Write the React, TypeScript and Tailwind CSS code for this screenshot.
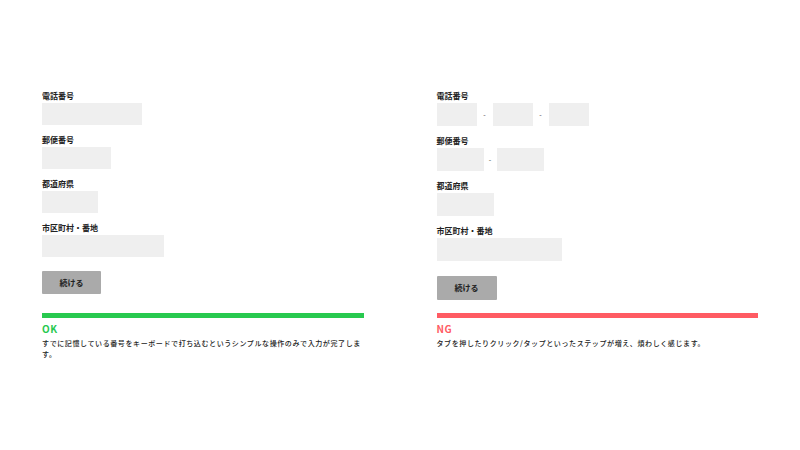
const font = { fontFamily: '"Noto Sans CJK JP", "Noto Sans", sans-serif' };

function Label({ children }: { children: React.ReactNode }) {
  return (
    <p className="text-[8px] leading-[12px] font-bold text-[#222]">{children}</p>
  );
}

function Campo({ className }: { className: string }) {
  return <div className={`bg-[#efefef] ${className}`} />;
}

function Guion({ ancho }: { ancho: string }) {
  return (
    <span className={`${ancho} text-center text-[7px] leading-none text-[#444]`}>
      -
    </span>
  );
}

function Resultado({
  tipo,
  texto,
}: {
  tipo: "OK" | "NG";
  texto: string;
}) {
  const ok = tipo === "OK";
  return (
    <div>
      <div className={`h-[5px] ${ok ? "bg-[#28c94f]" : "bg-[#ff5b63]"}`} />
      <p
        className={`mt-[5px] text-[10px] leading-[12px] font-bold tracking-[0.5px] ${
          ok ? "text-[#28c94f]" : "text-[#ff5b63]"
        }`}
      >
        {tipo}
      </p>
      <p className="mt-[3px] text-[7px] leading-[10.5px] tracking-[0.6px] font-medium text-[#222]">
        {texto}
      </p>
    </div>
  );
}

export default function App() {
  return (
    <div
      className="w-[800px] h-[450px] bg-white px-[42px] pt-[90px] grid grid-cols-2 gap-x-[73px] gap-y-[13px] content-start"
      style={font}
    >
      {/* formulario izquierdo */}
      <div className="flex flex-col gap-[9px] self-start">
        <div className="flex flex-col gap-[1px]">
          <Label>電話番号</Label>
          <Campo className="w-[100px] h-[22px]" />
        </div>
        <div className="flex flex-col gap-[1px]">
          <Label>郵便番号</Label>
          <Campo className="w-[69px] h-[22px]" />
        </div>
        <div className="flex flex-col gap-[1px]">
          <Label>都道府県</Label>
          <Campo className="w-[56px] h-[22px]" />
        </div>
        <div className="flex flex-col gap-[1px]">
          <Label>市区町村・番地</Label>
          <Campo className="w-[122px] h-[22px]" />
        </div>
        <button className="mt-[5px] w-[59px] h-[23px] bg-[#aaaaaa] rounded-[1px] text-[8px] font-bold text-[#222]">
          続ける
        </button>
      </div>

      {/* formulario derecho */}
      <div className="flex flex-col gap-[9px]">
        <div className="flex flex-col gap-[1px]">
          <Label>電話番号</Label>
          <div className="flex items-center">
            <Campo className="w-[40px] h-[23px]" />
            <Guion ancho="w-[16px]" />
            <Campo className="w-[40px] h-[23px]" />
            <Guion ancho="w-[16px]" />
            <Campo className="w-[40px] h-[23px]" />
          </div>
        </div>
        <div className="flex flex-col gap-[1px]">
          <Label>郵便番号</Label>
          <div className="flex items-center">
            <Campo className="w-[47px] h-[23px]" />
            <Guion ancho="w-[13px]" />
            <Campo className="w-[47px] h-[23px]" />
          </div>
        </div>
        <div className="flex flex-col gap-[1px]">
          <Label>都道府県</Label>
          <Campo className="w-[57px] h-[23px]" />
        </div>
        <div className="flex flex-col gap-[1px]">
          <Label>市区町村・番地</Label>
          <Campo className="w-[125px] h-[23px]" />
        </div>
        <button className="mt-[6px] w-[60px] h-[24px] bg-[#aaaaaa] rounded-[1px] text-[8px] font-bold text-[#222]">
          続ける
        </button>
      </div>

      <Resultado
        tipo="OK"
        texto="すでに記憶している番号をキーボードで打ち込むというシンプルな操作のみで入力が完了します。"
      />
      <Resultado
        tipo="NG"
        texto="タブを押したりクリック/タップといったステップが増え、煩わしく感じます。"
      />
    </div>
  );
}
